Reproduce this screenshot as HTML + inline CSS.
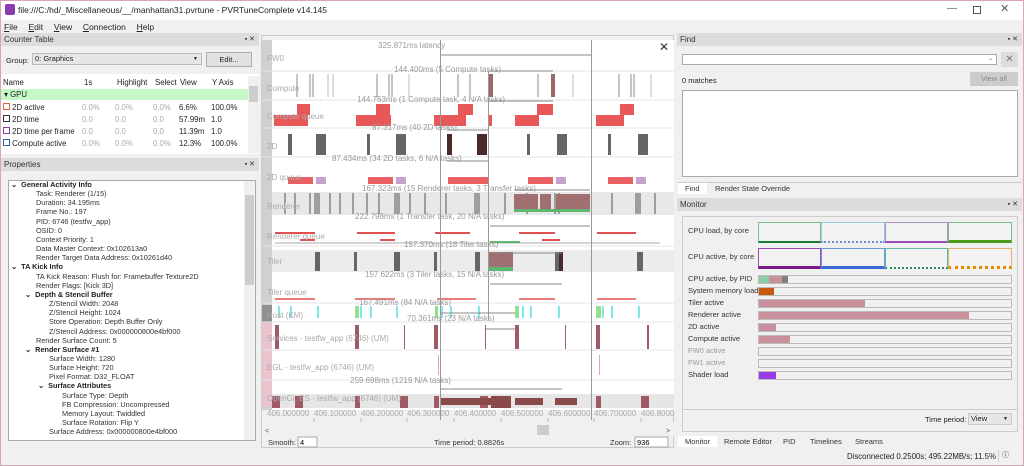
<!DOCTYPE html><html><head><meta charset="utf-8"><style>
*{box-sizing:border-box;margin:0;padding:0}
body{width:1024px;height:466px;overflow:hidden;background:#f0f0f0;font-family:"Liberation Sans",sans-serif;font-size:8px;color:#222;position:relative}
.a{position:absolute;white-space:nowrap}
.hd{position:absolute;background:#dcdcdc;height:13px;font-size:8px;line-height:13px;padding-left:3px;color:#333}
.hd i{position:absolute;right:4px;font-style:normal;font-size:7px}
.box{position:absolute;background:#fff;border:1px solid #aaa}
.tr{position:absolute;font-size:7.3px;line-height:9.15px;white-space:nowrap;color:#333}
.b{font-weight:bold;color:#222}
.ml{position:absolute;left:688px;font-size:7.5px;color:#333}
.bar{position:absolute;left:758px;width:254px;height:9px;background:#f0f0f0;border:1px solid #bbb}
.bar div{position:absolute;top:0;bottom:0;left:0}
.tab{position:absolute;font-size:7.5px;line-height:11px;padding:0 7px;color:#333}
</style></head><body>
<div class="a" style="left:0;top:0;width:1024px;height:466px;border:1px solid #d9a6b6"></div>
<div class="a" style="left:1px;top:1px;width:1022px;height:19px;background:#fff"></div>
<div class="a" style="left:5px;top:4px;width:10px;height:11px;background:#8a3cb0;border-radius:2px"></div>
<div class="a" style="left:18px;top:5px;font-size:8.5px">file:///C:/hd/_Miscellaneous/__/manhattan31.pvrtune - PVRTuneComplete v14.145</div>
<div class="a" style="left:947px;top:3px;font-size:10px;color:#555">—</div>
<div class="a" style="left:973px;top:6px;width:8px;height:8px;border:1px solid #555"></div>
<div class="a" style="left:1000px;top:2px;font-size:11px;color:#555">✕</div>
<div class="a" style="left:4px;top:22px;font-size:8.5px;word-spacing:3px"><u>F</u>ile &nbsp;<u>E</u>dit &nbsp;<u>V</u>iew &nbsp;<u>C</u>onnection &nbsp;<u>H</u>elp</div>

<!-- Counter table -->
<div class="hd" style="left:1px;top:33px;width:258px">Counter Table<i>▪ ✕</i></div>
<div class="a" style="left:6px;top:56px;font-size:7.5px">Group:</div>
<div class="a" style="left:32px;top:53px;width:170px;height:12px;background:#e6e6e6;border:1px solid #bbb;font-size:7.5px;line-height:10px;padding-left:2px">0: Graphics<span style="position:absolute;right:3px;font-size:5px">▼</span></div>
<div class="a" style="left:206px;top:52px;width:46px;height:15px;background:#e1e1e1;border:1px solid #adadad;font-size:7.5px;line-height:13px;text-align:center">Edit...</div>
<div class="box" style="left:1px;top:74px;width:258px;height:80px;border:none"></div>
<div class="a" style="left:3px;top:78px;font-size:7.8px">Name</div>
<div class="a" style="left:84px;top:78px;font-size:7.8px">1s</div>
<div class="a" style="left:117px;top:78px;font-size:7.8px">Highlight</div>
<div class="a" style="left:155px;top:78px;font-size:7.8px">Select</div>
<div class="a" style="left:180px;top:78px;font-size:7.8px">View</div>
<div class="a" style="left:212px;top:78px;font-size:7.8px">Y Axis</div>
<div class="a" style="left:248px;top:76px;width:11px;height:77px;background:#f0f0f0"></div>
<div class="a" style="left:249px;top:86px;width:9px;height:16px;background:#cdcdcd"></div>
<div class="a" style="left:1px;top:89px;width:247px;height:11px;background:#c6f7c6"></div>
<div class="a" style="left:4px;top:90px;font-size:7.8px">▾ GPU</div>
<div class="a" style="left:3px;top:102px;font-size:7.8px;line-height:12px">
<span style="display:inline-block;width:7px;height:7px;border:1px solid #e06040"></span> 2D active<br>
<span style="display:inline-block;width:7px;height:7px;border:1px solid #333"></span> 2D time<br>
<span style="display:inline-block;width:7px;height:7px;border:1px solid #8a3cb0"></span> 2D time per frame<br>
<span style="display:inline-block;width:7px;height:7px;border:1px solid #336699"></span> Compute active</div>
<div class="a" style="left:82px;top:102px;font-size:7.8px;line-height:12px;color:#aaa">0.0%<br>0.0<br>0.0<br>0.0%</div>
<div class="a" style="left:115px;top:102px;font-size:7.8px;line-height:12px;color:#aaa">0.0%<br>0.0<br>0.0<br>0.0%</div>
<div class="a" style="left:153px;top:102px;font-size:7.8px;line-height:12px;color:#aaa">0.0%<br>0.0<br>0.0<br>0.0%</div>
<div class="a" style="left:179px;top:102px;font-size:7.8px;line-height:12px">6.6%<br>57.99m<br>11.39m<br>12.3%</div>
<div class="a" style="left:211px;top:102px;font-size:7.8px;line-height:12px">100.0%<br>1.0<br>1.0<br>100.0%</div>

<!-- Properties -->
<div class="hd" style="left:1px;top:158px;width:258px">Properties<i>▪ ✕</i></div>
<div class="box" style="left:8px;top:180px;width:248px;height:261px;overflow:hidden">
<div class="a" style="right:0;top:0;width:11px;height:259px;background:#f0f0f0"></div>
<div class="a" style="right:1px;top:14px;width:9px;height:90px;background:#cdcdcd"></div>
</div>
<div class="tr" style="left:11px;top:180px">
<span class="b">⌄&nbsp;&nbsp;General Activity Info</span><br>
<span style="padding-left:25px">Task: Renderer (1/15)</span><br>
<span style="padding-left:25px">Duration: 34.195ms</span><br>
<span style="padding-left:25px">Frame No.: 197</span><br>
<span style="padding-left:25px">PID: 6746 (testfw_app)</span><br>
<span style="padding-left:25px">OSID: 0</span><br>
<span style="padding-left:25px">Context Priority: 1</span><br>
<span style="padding-left:25px">Data Master Context: 0x102613a0</span><br>
<span style="padding-left:25px">Render Target Data Address: 0x10261d40</span><br>
<span class="b">⌄&nbsp;&nbsp;TA Kick Info</span><br>
<span style="padding-left:25px">TA Kick Reason: Flush for: Framebuffer Texture2D</span><br>
<span style="padding-left:25px">Render Flags: [Kick 3D]</span><br>
<span class="b" style="padding-left:14px">⌄&nbsp;&nbsp;Depth &amp; Stencil Buffer</span><br>
<span style="padding-left:38px">Z/Stencil Width: 2048</span><br>
<span style="padding-left:38px">Z/Stencil Height: 1024</span><br>
<span style="padding-left:38px">Store Operation: Depth Buffer Only</span><br>
<span style="padding-left:38px">Z/Stencil Address: 0x000000800e4bf000</span><br>
<span style="padding-left:25px">Render Surface Count: 5</span><br>
<span class="b" style="padding-left:14px">⌄&nbsp;&nbsp;Render Surface #1</span><br>
<span style="padding-left:38px">Surface Width: 1280</span><br>
<span style="padding-left:38px">Surface Height: 720</span><br>
<span style="padding-left:38px">Pixel Format: D32_FLOAT</span><br>
<span class="b" style="padding-left:27px">⌄&nbsp;&nbsp;Surface Attributes</span><br>
<span style="padding-left:51px">Surface Type: Depth</span><br>
<span style="padding-left:51px">FB Compression: Uncompressed</span><br>
<span style="padding-left:51px">Memory Layout: Twiddled</span><br>
<span style="padding-left:51px">Surface Rotation: Flip Y</span><br>
<span style="padding-left:38px">Surface Address: 0x000000800e4bf000</span><br>
</div>

<!-- Timeline -->
<div class="a" style="left:261px;top:35px;width:413px;height:413px;background:#f0f0f0;border:1px solid #ccc"></div>
<svg class="a" style="left:262px;top:36px" width="412" height="412" viewBox="262 36 412 412" font-family="Liberation Sans, sans-serif" font-size="8">
<rect x="262" y="40" width="412" height="370" fill="#fff"/>
<rect x="262" y="192" width="412" height="23" fill="#e8e8e8"/>
<rect x="272" y="250" width="402" height="22" fill="#ececec"/>
<rect x="262" y="394" width="412" height="14" fill="#e6e6e6"/>
<rect x="262" y="40" width="10" height="370" fill="#d0d0d0"/>
<rect x="262" y="305" width="10" height="17" fill="#909090"/>
<rect x="262" y="322" width="10" height="85" fill="#e9c4cc"/>
<g stroke="#e4e4e4"><line x1="262" x2="674" y1="71" y2="71"/><line x1="262" x2="674" y1="100" y2="100"/><line x1="262" x2="674" y1="128" y2="128"/><line x1="262" x2="674" y1="157" y2="157"/><line x1="262" x2="674" y1="246" y2="246"/><line x1="262" x2="674" y1="303" y2="303"/><line x1="262" x2="674" y1="322" y2="322"/><line x1="262" x2="674" y1="350" y2="350"/><line x1="262" x2="674" y1="380" y2="380"/></g>
<g stroke="#888" stroke-width="1"><line x1="297" x2="297" y1="74" y2="97"/><line x1="310" x2="310" y1="74" y2="97"/><line x1="313" x2="313" y1="74" y2="97"/><line x1="377" x2="377" y1="74" y2="97"/><line x1="389" x2="389" y1="74" y2="97"/><line x1="392" x2="392" y1="74" y2="97"/><line x1="458" x2="458" y1="74" y2="97"/><line x1="470" x2="470" y1="74" y2="97"/><line x1="538" x2="538" y1="74" y2="97"/><line x1="619" x2="619" y1="74" y2="97"/><line x1="631" x2="631" y1="74" y2="97"/><line x1="634" x2="634" y1="74" y2="97"/></g>
<g stroke="#ddd" stroke-width="2"><line x1="328" x2="328" y1="74" y2="97"/><line x1="333" x2="333" y1="74" y2="97"/><line x1="409" x2="409" y1="74" y2="97"/><line x1="573" x2="573" y1="74" y2="97"/><line x1="651" x2="651" y1="74" y2="97"/></g>
<rect x="489" y="74" width="4" height="23" fill="#9a6a6a"/><rect x="551" y="74" width="4" height="23" fill="#9a6a6a"/>
<g fill="#e85858"><rect x="274" y="115" width="34" height="11"/><rect x="297" y="104" width="13" height="11"/><rect x="356" y="115" width="35" height="11"/><rect x="376" y="104" width="14" height="11"/><rect x="434" y="115" width="32" height="11"/><rect x="458" y="104" width="15" height="11"/><rect x="515" y="115" width="24" height="11"/><rect x="537" y="104" width="16" height="11"/><rect x="596" y="115" width="28" height="11"/><rect x="620" y="104" width="14" height="11"/><rect x="488" y="115" width="4" height="11"/></g>
<g fill="#666"><rect x="288" y="134" width="4" height="21"/><rect x="316" y="134" width="10" height="21"/><rect x="367" y="134" width="3" height="21"/><rect x="396" y="134" width="10" height="21"/><rect x="527" y="134" width="3" height="21"/><rect x="557" y="134" width="10" height="21"/><rect x="608" y="134" width="3" height="21"/><rect x="638" y="134" width="10" height="21"/></g>
<g fill="#4a2a2a"><rect x="447" y="134" width="5" height="21"/><rect x="477" y="134" width="10" height="21"/></g>
<g fill="#e86060"><rect x="288" y="177" width="25" height="7"/><rect x="368" y="177" width="25" height="7"/><rect x="448" y="177" width="40" height="7"/><rect x="528" y="177" width="25" height="7"/><rect x="608" y="177" width="25" height="7"/></g>
<g fill="#c8a0d0"><rect x="316" y="177" width="10" height="7"/><rect x="396" y="177" width="10" height="7"/><rect x="556" y="177" width="10" height="7"/><rect x="636" y="177" width="10" height="7"/></g>
<g stroke="#555" stroke-width="1"><line x1="285" x2="285" y1="193" y2="214"/><line x1="295" x2="295" y1="193" y2="214"/><line x1="310" x2="310" y1="193" y2="214"/><line x1="315" x2="315" y1="193" y2="214"/><line x1="317" x2="317" y1="193" y2="214"/><line x1="319" x2="319" y1="193" y2="214"/><line x1="330" x2="330" y1="193" y2="214"/><line x1="340" x2="340" y1="193" y2="214"/><line x1="353" x2="353" y1="193" y2="214"/><line x1="367" x2="367" y1="193" y2="214"/><line x1="379" x2="379" y1="193" y2="214"/><line x1="395" x2="395" y1="193" y2="214"/><line x1="397" x2="397" y1="193" y2="214"/><line x1="399" x2="399" y1="193" y2="214"/><line x1="410" x2="410" y1="193" y2="214"/><line x1="425" x2="425" y1="193" y2="214"/><line x1="446" x2="446" y1="193" y2="214"/><line x1="475" x2="475" y1="193" y2="214"/><line x1="477" x2="477" y1="193" y2="214"/><line x1="479" x2="479" y1="193" y2="214"/><line x1="505" x2="505" y1="193" y2="214"/><line x1="527" x2="527" y1="193" y2="214"/><line x1="555" x2="555" y1="193" y2="214"/><line x1="559" x2="559" y1="193" y2="214"/><line x1="612" x2="612" y1="193" y2="214"/><line x1="636" x2="636" y1="193" y2="214"/><line x1="638" x2="638" y1="193" y2="214"/><line x1="640" x2="640" y1="193" y2="214"/><line x1="655" x2="655" y1="193" y2="214"/></g>
<g fill="#a07070"><rect x="514" y="194" width="24" height="16"/><rect x="540" y="194" width="11" height="16"/><rect x="556" y="194" width="34" height="16"/></g>
<g fill="#5cb870"><rect x="514" y="209" width="76" height="3"/></g>
<g stroke="#e05050" stroke-width="2"><line x1="275" x2="315" y1="233" y2="233"/><line x1="357" x2="395" y1="233" y2="233"/><line x1="435" x2="470" y1="233" y2="233"/><line x1="519" x2="555" y1="233" y2="233"/><line x1="597" x2="636" y1="233" y2="233"/><line x1="300" x2="315" y1="240" y2="240"/><line x1="380" x2="395" y1="240" y2="240"/><line x1="542" x2="560" y1="240" y2="240"/></g>
<g stroke="#aaa"><line x1="275" x2="660" y1="243" y2="243"/></g>
<g stroke="#5cb870" stroke-width="2"><line x1="490" x2="520" y1="242" y2="242"/></g>
<g fill="#666"><rect x="315" y="252" width="5" height="19"/><rect x="354" y="252" width="3" height="19"/><rect x="394" y="252" width="6" height="19"/><rect x="434" y="252" width="3" height="19"/><rect x="475" y="252" width="5" height="19"/><rect x="555" y="252" width="6" height="19"/><rect x="637" y="252" width="6" height="19"/></g>
<rect x="489" y="252" width="24" height="16" fill="#a07070"/><rect x="489" y="267" width="24" height="4" fill="#5cb870"/>
<rect x="559" y="252" width="4" height="19" fill="#4a2a2a"/>
<g stroke="#e05050" stroke-width="1.5"><line x1="275" x2="315" y1="299" y2="299"/><line x1="355" x2="395" y1="299" y2="299"/><line x1="437" x2="476" y1="299" y2="299"/><line x1="519" x2="555" y1="299" y2="299"/><line x1="597" x2="636" y1="299" y2="299"/></g>
<g fill="#80e8e8"><rect x="278" y="306" width="2" height="12"/><rect x="290" y="306" width="2" height="12"/><rect x="317" y="306" width="2" height="12"/><rect x="360" y="306" width="2" height="12"/><rect x="370" y="306" width="2" height="12"/><rect x="396" y="306" width="2" height="12"/><rect x="441" y="306" width="2" height="12"/><rect x="450" y="306" width="2" height="12"/><rect x="478" y="306" width="2" height="12"/><rect x="522" y="306" width="2" height="12"/><rect x="530" y="306" width="2" height="12"/><rect x="558" y="306" width="2" height="12"/><rect x="602" y="306" width="2" height="12"/><rect x="611" y="306" width="2" height="12"/><rect x="638" y="306" width="2" height="12"/></g>
<g fill="#90e090"><rect x="355" y="306" width="4" height="12"/><rect x="435" y="306" width="3" height="12"/><rect x="515" y="306" width="4" height="12"/><rect x="596" y="306" width="5" height="12"/></g>
<g fill="#a05a66"><rect x="275" y="325" width="4" height="24"/><rect x="355" y="325" width="4" height="24"/><rect x="434" y="325" width="4" height="24"/><rect x="515" y="325" width="4" height="24"/><rect x="596" y="325" width="4" height="24"/><rect x="647" y="325" width="2" height="24"/><rect x="404" y="325" width="1" height="24"/><rect x="485" y="325" width="1" height="24"/><rect x="565" y="325" width="1" height="24"/></g>
<g fill="#d8a8b0"><rect x="438" y="355" width="1" height="20"/><rect x="599" y="355" width="1" height="20"/></g>
<g fill="#a05a66"><rect x="272" y="396" width="8" height="12"/><rect x="295" y="396" width="8" height="12"/><rect x="355" y="396" width="5" height="12"/><rect x="400" y="396" width="8" height="12"/><rect x="434" y="396" width="5" height="12"/><rect x="480" y="396" width="8" height="12"/><rect x="596" y="396" width="5" height="12"/><rect x="641" y="396" width="8" height="12"/></g>
<g fill="#8a4a4a"><rect x="441" y="398" width="50" height="7"/><rect x="491" y="396" width="20" height="12"/><rect x="515" y="398" width="28" height="7"/><rect x="555" y="398" width="22" height="7"/></g>
<g stroke="#999" stroke-width="1"><line x1="440.5" x2="440.5" y1="40" y2="420"/><line x1="591.5" x2="591.5" y1="40" y2="420"/><line x1="488.5" x2="488.5" y1="71" y2="320"/></g>
<g stroke="#888"><line x1="441" x2="591" y1="55" y2="55"/><line x1="490" x2="553" y1="71" y2="71"/><line x1="490" x2="553" y1="101" y2="101"/><line x1="447" x2="488" y1="130" y2="130"/><line x1="447" x2="488" y1="161" y2="161"/><line x1="514" x2="590" y1="190" y2="190"/><line x1="490" x2="590" y1="226" y2="226"/><line x1="490" x2="562" y1="253" y2="253"/><line x1="490" x2="562" y1="284" y2="284"/><line x1="441" x2="515" y1="313" y2="313"/><line x1="486" x2="515" y1="329" y2="329"/><line x1="441" x2="562" y1="389" y2="389"/></g>
<g fill="#999"><text x="378" y="48">325.871ms latency</text><text x="394" y="72">144.400ms (5 Compute tasks)</text><text x="357" y="102">144.763ms (1 Compute task, 4 N/A tasks)</text><text x="372" y="130">87.317ms (40 2D tasks)</text><text x="332" y="161">87.434ms (34 2D tasks, 6 N/A tasks)</text><text x="362" y="191">167.323ms (15 Renderer tasks, 3 Transfer tasks)</text><text x="355" y="219">222.798ms (1 Transfer task, 20 N/A tasks)</text><text x="404" y="247">157.370ms (18 Tiler tasks)</text><text x="365" y="277">157.622ms (3 Tiler tasks, 15 N/A tasks)</text><text x="359" y="305">167.491ms (84 N/A tasks)</text><text x="407" y="321">70.361ms (23 N/A tasks)</text><text x="350" y="383">259.698ms (1219 N/A tasks)</text></g>
<g fill="#aaa"><text x="267" y="61">FW0</text><text x="267" y="91">Compute</text><text x="267" y="119">Compute queue</text><text x="267" y="149">2D</text><text x="267" y="180">2D queue</text><text x="267" y="209">Renderer</text><text x="267" y="239">Renderer queue</text><text x="267" y="264">Tiler</text><text x="267" y="295">Tiler queue</text><text x="267" y="318">Host (KM)</text><text x="267" y="341">Services - testfw_app (6746) (UM)</text><text x="267" y="370">EGL - testfw_app (6746) (UM)</text><text x="267" y="401">OpenGL ES - testfw_app (6746) (UM)</text></g>
<g fill="#aaa"><text x="267" y="416">406.000000</text><text x="314" y="416">406.100000</text><text x="361" y="416">406.200000</text><text x="407" y="416">406.300000</text><text x="454" y="416">406.400000</text><text x="501" y="416">406.500000</text><text x="548" y="416">406.600000</text><text x="594" y="416">406.700000</text><text x="641" y="416">406.800000</text></g>
<g stroke="#bbb"><line x1="314" x2="314" y1="418" y2="422"/><line x1="361" x2="361" y1="418" y2="422"/><line x1="407" x2="407" y1="418" y2="422"/><line x1="454" x2="454" y1="418" y2="422"/><line x1="501" x2="501" y1="418" y2="422"/><line x1="548" x2="548" y1="418" y2="422"/><line x1="594" x2="594" y1="418" y2="422"/><line x1="641" x2="641" y1="418" y2="422"/></g>
<rect x="262" y="422" width="412" height="15" fill="#f0f0f0"/>
<rect x="537" y="425" width="12" height="10" fill="#cdcdcd"/>
<text x="265" y="433" fill="#555" font-size="7">&lt;</text><text x="666" y="433" fill="#555" font-size="7">&gt;</text>
<text x="659" y="51" fill="#333" font-size="12">✕</text>
<text x="268" y="445" fill="#333" font-size="7.5">Smooth:</text>
<rect x="298" y="437" width="19" height="10" fill="#fff" stroke="#aaa"/><text x="300" y="445" font-size="7.5">4</text>
<text x="434" y="445" fill="#333" font-size="7.5">Time period: 0.8826s</text>
<text x="610" y="445" fill="#333" font-size="7.5">Zoom:</text>
<rect x="635" y="437" width="33" height="10" fill="#fff" stroke="#aaa"/><text x="637" y="445" font-size="7.5">936</text>
</svg>

<!-- Find -->
<div class="hd" style="left:677px;top:33px;width:345px">Find<i>▪ ✕</i></div>
<div class="a" style="left:682px;top:54px;width:315px;height:11px;background:#fff;border:1px solid #aaa"><span style="position:absolute;right:3px;top:0;font-size:6px;color:#777">⌄</span></div>
<div class="a" style="left:1001px;top:52px;width:17px;height:15px;background:#ddd;text-align:center;font-size:10px;line-height:15px;color:#777">✕</div>
<div class="a" style="left:682px;top:76px;font-size:7.5px">0 matches</div>
<div class="a" style="left:970px;top:72px;width:48px;height:14px;background:#ccc;text-align:center;font-size:7.5px;line-height:14px;color:#888">View all</div>
<div class="box" style="left:682px;top:90px;width:336px;height:87px"></div>
<div class="a" style="left:678px;top:182px;width:344px;height:1px;background:#ccc"></div>
<div class="tab" style="left:678px;top:183px;background:#fff">Find</div>
<div class="tab" style="left:708px;top:183px">Render State Override</div>
<div class="hd" style="left:677px;top:198px;width:345px">Monitor<i>▪ ✕</i></div>
<div class="a" style="left:682px;top:216px;width:336px;height:216px;border:1px solid #ccc"></div>
<div class="a" style="left:683px;top:409px;width:334px;height:1px;background:#ccc"></div>
<div class="ml" style="top:226px">CPU load, by core</div>
<div class="ml" style="top:252px">CPU active, by core</div>
<div class="a" style="left:758px;top:222px;width:63px;height:21px;border:1px solid #7cba8c;border-bottom:2px solid #1a7a3a;background:#f2f2f2"></div>
<div class="a" style="left:821px;top:222px;width:64px;height:21px;border:1px solid #9ccce0;border-bottom:2px dotted #6a8ad8;background:#f2f2f2"></div>
<div class="a" style="left:885px;top:222px;width:63px;height:21px;border:1px solid #a890c8;border-bottom:2px solid #9a4ab8;background:#f2f2f2"></div>
<div class="a" style="left:948px;top:222px;width:64px;height:21px;border:1px solid #7cba8c;border-bottom:3px solid #4a9a1a;background:#f2f2f2"></div>
<div class="a" style="left:758px;top:248px;width:63px;height:21px;border:1px solid #9a4ab8;border-bottom:3px solid #7a1a8a;background:#f2f2f2"></div>
<div class="a" style="left:821px;top:248px;width:64px;height:21px;border:1px solid #6a9ad8;border-bottom:3px solid #3a6ad8;background:#f2f2f2"></div>
<div class="a" style="left:885px;top:248px;width:63px;height:21px;border:1px solid #5cb8a8;border-bottom:2px dotted #2a8a5a;background:#f2f2f2"></div>
<div class="a" style="left:948px;top:248px;width:64px;height:21px;border:1px solid #e8b070;border-bottom:3px dotted #e88a00;background:#f2f2f2"></div>
<div class="ml" style="top:274px">CPU active, by PID</div><div class="bar" style="top:275px"><div style="width:10px;background:#8ccca8"></div><div style="left:10px;width:13px;background:#c8909a"></div><div style="left:23px;width:6px;background:#808080"></div></div>
<div class="ml" style="top:286px">System memory load</div><div class="bar" style="top:287px"><div style="width:15px;background:#c85a10"></div></div>
<div class="ml" style="top:298px">Tiler active</div><div class="bar" style="top:299px"><div style="width:106px;background:#c8909a"></div></div>
<div class="ml" style="top:310px">Renderer active</div><div class="bar" style="top:311px"><div style="width:210px;background:#c8909a"></div></div>
<div class="ml" style="top:322px">2D active</div><div class="bar" style="top:323px"><div style="width:17px;background:#c8909a"></div></div>
<div class="ml" style="top:334px">Compute active</div><div class="bar" style="top:335px"><div style="width:31px;background:#c8909a"></div></div>
<div class="ml" style="top:346px;color:#999">FW0 active</div><div class="bar" style="top:347px"></div>
<div class="ml" style="top:358px;color:#999">FW1 active</div><div class="bar" style="top:359px"></div>
<div class="ml" style="top:370px">Shader load</div><div class="bar" style="top:371px"><div style="width:17px;background:#9a3ae8"></div></div>
<div class="a" style="left:925px;top:415px;font-size:7.5px">Time period:</div>
<div class="a" style="left:968px;top:413px;width:44px;height:12px;background:#e6e6e6;border:1px solid #ccc;font-size:7.5px;line-height:10px;padding-left:2px">View<span style="position:absolute;right:3px;font-size:5px">▼</span></div>
<div class="tab" style="left:678px;top:436px;background:#fff">Monitor</div>
<div class="tab" style="left:717px;top:436px">Remote Editor</div>
<div class="tab" style="left:776px;top:436px">PID</div>
<div class="tab" style="left:803px;top:436px">Timelines</div>
<div class="tab" style="left:848px;top:436px">Streams</div>
<div class="a" style="left:847px;top:452px;font-size:7.8px">Disconnected 0.2500s; 495.22MB/s; 11.5%</div>
<div class="a" style="left:998px;top:450px;width:14px;height:12px;border-left:1px solid #ccc;font-size:7px;text-align:center;line-height:12px">ⓘ</div>
</body></html>
